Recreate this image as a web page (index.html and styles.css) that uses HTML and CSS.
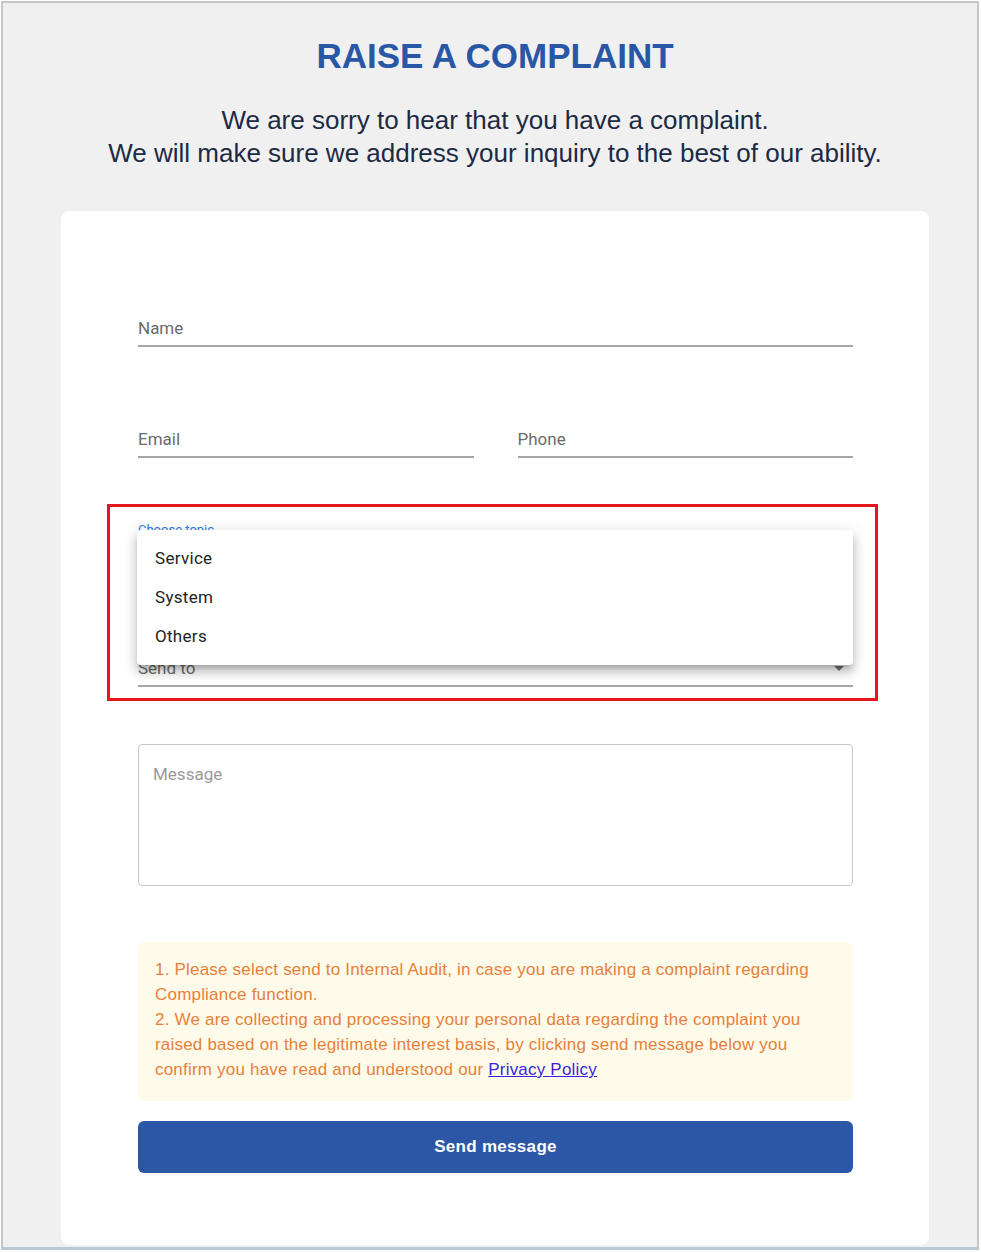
FILE: index.html
```html
<!DOCTYPE html>
<html lang="en">
<head>
    <meta charset="UTF-8">
    <meta name="viewport" content="width=device-width, initial-scale=1.0">
    <title>Raise a Complaint</title>
    <link rel="stylesheet" href="styles.css">
</head>
<body>
<div class="frame">
    <header class="head">
        <h1 class="title">RAISE A COMPLAINT</h1>
        <p class="intro">
            We are sorry to hear that you have a complaint.<br>
            We will make sure we address your inquiry to the best of our ability.
        </p>
    </header>

    <form class="card">
        <input class="field" type="text" placeholder="Name">

        <div class="row">
            <input class="field" type="email" placeholder="Email">
            <input class="field" type="tel" placeholder="Phone">
        </div>

        <!-- highlighted area: open topic select -->
        <div class="highlight">
            <div class="select select-open">
                <span class="select-label">Choose topic</span>
                <div class="field select-field"></div>
                <ul class="menu">
                    <li>Service</li>
                    <li>System</li>
                    <li>Others</li>
                </ul>
            </div>
            <div class="select">
                <div class="field select-field">
                    <span>Send to</span>
                    <svg class="arrow" width="10" height="5" viewBox="0 0 10 5"><path d="M0 0h10L5 5z" fill="#757575"/></svg>
                </div>
            </div>
        </div>

        <textarea class="message" placeholder="Message"></textarea>

        <div class="notice">
            1. Please select send to Internal Audit, in case you are making a complaint regarding Compliance function.<br>
            2. We are collecting and processing your personal data regarding the complaint you raised based on the legitimate interest basis, by clicking send message below you confirm you have read and understood our <a href="#">Privacy Policy</a>
        </div>

        <button class="send" type="button">Send message</button>
    </form>
</div>
</body>
</html>
```

FILE: styles.css
```css
body {
    margin: 0;
    background: #fff;
}
.frame {
    margin: 1px 2px 0 1px;
    height: 1244px;
    border: 2px solid #c6c6c6;
    border-bottom: 3px solid #b8c8d4;
    background: #f0f0f0;
    font-family: "Liberation Sans", Arial, sans-serif;
    overflow: hidden;
}
.head {
    margin-left: 58px;
    width: 868px;
    padding-top: 33px;
    text-align: center;
}
.title {
    margin: 0;
    font-size: 35px;
    line-height: 40px;
    color: #2a56a6;
    font-weight: bold;
}
.intro {
    margin: 28px -60px 0;
    font-size: 26px;
    line-height: 33px;
    color: #1c2a44;
}
.card {
    margin: 41px 0 0 58px;
    width: 868px;
    box-sizing: border-box;
    padding: 106px 76px 72px 77px;
    background: #fff;
    border-radius: 8px;
    display: flex;
    flex-direction: column;
}
.field {
    display: block;
    width: 100%;
    height: 30px;
    box-sizing: border-box;
    padding: 0 0 6px;
    border: 0;
    border-bottom: 2px solid #a6a6a6;
    background: transparent;
    font-family: Roboto, sans-serif;
    font-size: 17px;
    line-height: 22px;
    color: #222;
    outline: none;
}
.field::placeholder {
    color: #6b6b6b;
}
.row {
    margin-top: 81px;
    display: flex;
    gap: 44px;
}
.row .field {
    flex: 1;
}
.highlight {
    margin: 46px -25px 0 -31px;
    padding: 16px 22px 11px 28px;
    border: 3px solid #e3161d;
}
.select {
    position: relative;
}
.select-open {
    margin-bottom: 90px;
}
.select-label {
    display: block;
    font-family: Roboto, sans-serif;
    font-size: 13px;
    line-height: 14px;
    color: #2f7ae0;
}
.select-field {
    display: flex;
    justify-content: space-between;
    align-items: center;
    color: #6b6b6b;
}
.select-field span {
    line-height: 22px;
}
.arrow {
    margin-right: 9px;
}
.menu {
    position: absolute;
    top: 7px;
    left: -1px;
    right: 0;
    margin: 0;
    padding: 9px 0 9px;
    list-style: none;
    background: #fff;
    border-radius: 4px;
    box-shadow: 0 5px 5px -3px rgba(0, 0, 0, 0.2), 0 8px 10px 1px rgba(0, 0, 0, 0.14), 0 3px 14px 2px rgba(0, 0, 0, 0.12);
    font-family: Roboto, sans-serif;
    font-size: 17px;
    letter-spacing: 0.3px;
    color: #222;
    z-index: 2;
}
.menu li {
    height: 39px;
    line-height: 39px;
    padding-left: 18px;
}
.message {
    margin-top: 43px;
    height: 142px;
    box-sizing: border-box;
    padding: 18px 14px;
    border: 1px solid #c8c8c8;
    border-radius: 4px;
    font-family: Roboto, sans-serif;
    font-size: 17px;
    line-height: 22px;
    resize: none;
    outline: none;
}
.message::placeholder {
    color: #9a9a9a;
}
.notice {
    margin-top: 56px;
    height: 159px;
    box-sizing: border-box;
    padding: 15px 30px 0 17px;
    background: #fefbeb;
    border-radius: 6px;
    font-size: 17px;
    letter-spacing: 0.2px;
    line-height: 25px;
    color: #e8803a;
}
.notice a {
    color: #3a1fdc;
}
.send {
    margin-top: 20px;
    height: 52px;
    border: 0;
    border-radius: 6px;
    background: #2c57a6;
    color: #fff;
    font-family: "Liberation Sans", Arial, sans-serif;
    font-size: 17px;
    letter-spacing: 0.3px;
    font-weight: bold;
}
```
